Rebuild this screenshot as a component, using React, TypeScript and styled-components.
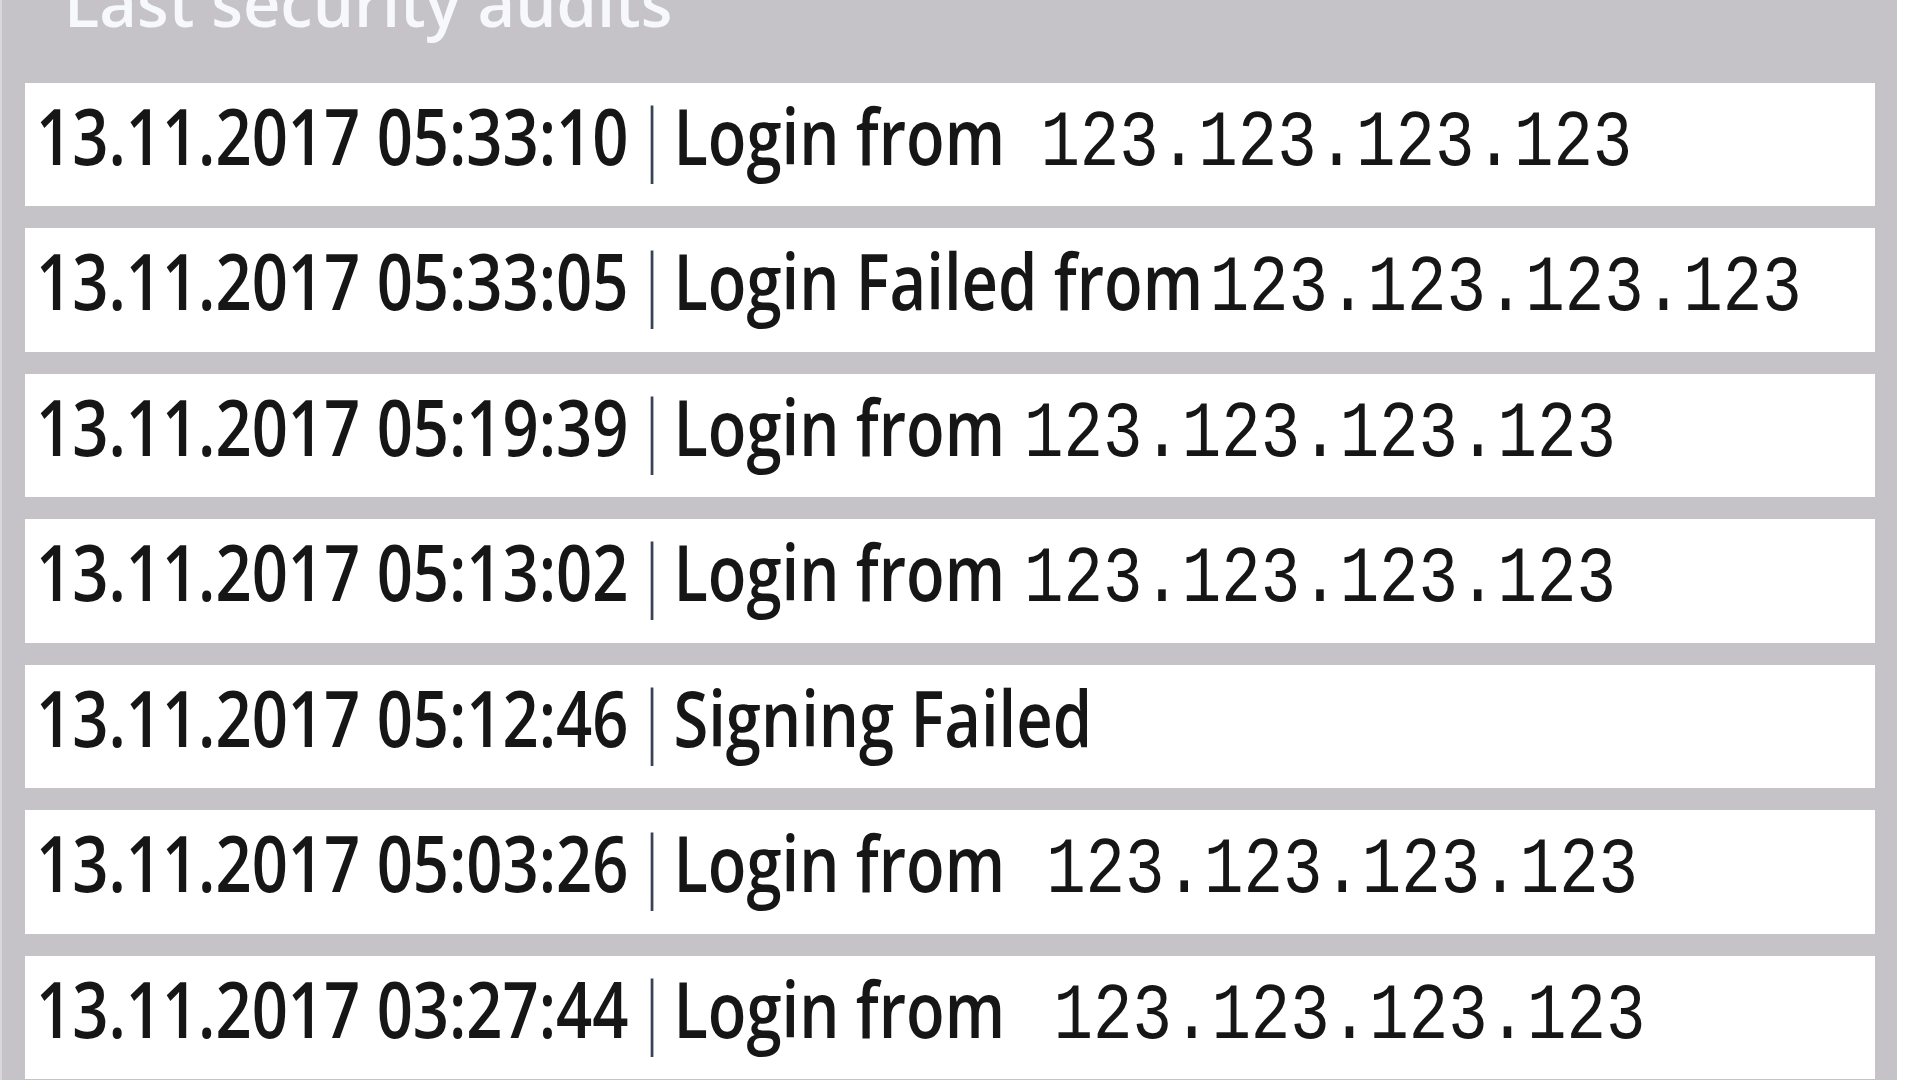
import React from "react";
import styled, { createGlobalStyle } from "styled-components";

const GlobalStyle = createGlobalStyle`
  html, body {
    margin: 0;
    padding: 0;
    background: #ffffff;
    overflow: hidden;
  }
`;

const Panel = styled.section`
  box-sizing: border-box;
  width: 1897px;
  min-height: 1080px;
  background: #c5c3c7;
  border-left: 2px solid #d9d7db;
  padding: 0 22px 0 23px;
`;

const Header = styled.header`
  display: flex;
  flex-direction: column;
  height: 82.5px;
`;

const Title = styled.h2`
  margin: -42px 0 0 39px;
  font-family: "Open Sans", "Noto Sans", sans-serif;
  font-weight: 600;
  font-size: 65px;
  line-height: normal;
  color: #f6f8fb;
  white-space: nowrap;
`;

const List = styled.ul`
  list-style: none;
  margin: 0;
  padding: 0;
  display: flex;
  flex-direction: column;
  gap: 22px;
`;

const Row = styled.li`
  box-sizing: border-box;
  height: 123.5px;
  background: #ffffff;
  padding-left: 11px;
  overflow: hidden;
  display: flex;
  align-items: flex-start;
`;

const Line = styled.div`
  display: inline-flex;
  align-items: baseline;
  white-space: nowrap;
  transform: scaleX(0.822);
  transform-origin: left top;
  font-family: "Open Sans", "Noto Sans", sans-serif;
  font-weight: 600;
  font-size: 77px;
  line-height: normal;
  color: #161616;
`;

const Stamp = styled.span``;

const Pipe = styled.span`
  font-weight: 300;
  color: #3a4356;
  margin: 0 5px 0 8px;
`;

const Message = styled.span``;

const Address = styled.span<{ $gap: number }>`
  font-family: "Liberation Mono", "DejaVu Sans Mono", monospace;
  font-weight: 400;
  font-size: 80px;
  color: #161616;
  margin-left: ${(p) => p.$gap}px;
`;

type Audit = { stamp: string; message: string; ip?: string; gap?: number };

const audits: Audit[] = [
  { stamp: "13.11.2017 05:33:10", message: "Login from", ip: "123.123.123.123", gap: 43 },
  { stamp: "13.11.2017 05:33:05", message: "Login Failed from", ip: "123.123.123.123", gap: 8 },
  { stamp: "13.11.2017 05:19:39", message: "Login from", ip: "123.123.123.123", gap: 23 },
  { stamp: "13.11.2017 05:13:02", message: "Login from", ip: "123.123.123.123", gap: 23 },
  { stamp: "13.11.2017 05:12:46", message: "Signing Failed" },
  { stamp: "13.11.2017 05:03:26", message: "Login from", ip: "123.123.123.123", gap: 50 },
  { stamp: "13.11.2017 03:27:44", message: "Login from", ip: "123.123.123.123", gap: 59 },
];

export default function App() {
  return (
    <>
      <GlobalStyle />
      <Panel>
        <Header>
          <Title>Last security audits</Title>
        </Header>
        <List>
          {audits.map((a) => (
            <Row key={a.stamp}>
              <Line>
                <Stamp>{a.stamp}</Stamp>
                <Pipe>|</Pipe>
                <Message>{a.message}</Message>
                {a.ip && <Address $gap={a.gap ?? 20}>{a.ip}</Address>}
              </Line>
            </Row>
          ))}
        </List>
      </Panel>
    </>
  );
}
